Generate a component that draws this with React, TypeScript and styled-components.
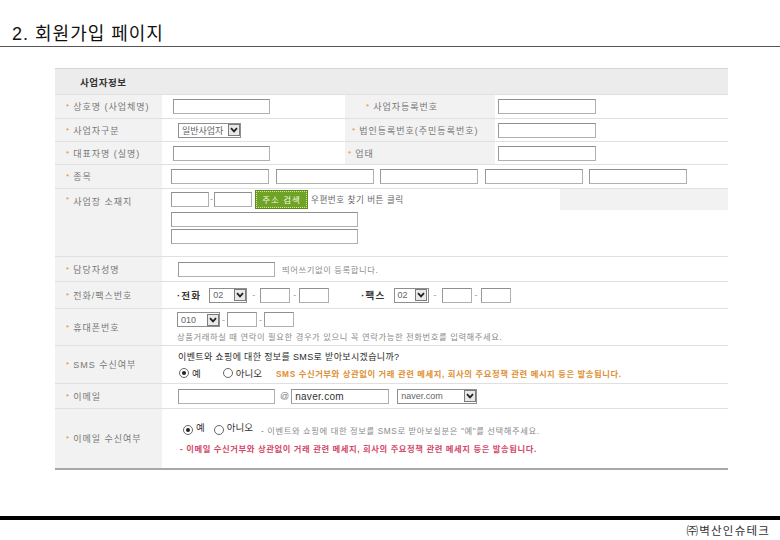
import React from "react";
import styled, { createGlobalStyle } from "styled-components";

const Global = createGlobalStyle`
  html, body { margin: 0; padding: 0; background: #fff; }
  body { font-family: "Liberation Sans", "Noto Sans CJK KR", sans-serif; }
  * { box-sizing: border-box; }
`;

const Page = styled.div`
  width: 780px;
  height: 540px;
  display: flex;
  flex-direction: column;
  overflow: hidden;
`;

const TitleBar = styled.header`
  height: 47px;
  padding: 18px 0 0 12px;
  display: flex;
  align-items: center;
  border-bottom: 1px solid #555;
`;

const Title = styled.h1`
  margin: 0;
  font-size: 18px;
  font-weight: normal;
  color: #111;
  letter-spacing: 1px;
`;

const Form = styled.section`
  margin: 21px 0 0 55px;
  width: 673px;
  border-top: 1px solid #d4d4d4;
  border-bottom: 2px solid #a8a8a8;
`;

const Header = styled.div`
  height: 25px;
  background: #ececec;
  display: flex;
  align-items: center;
  padding-left: 25px;
  font-size: 9.5px;
  font-weight: bold;
  letter-spacing: 0.6px;
  color: #333;
`;

const Row = styled.div<{ h: number }>`
  display: flex;
  height: ${(p) => p.h}px;
  border-top: 1px solid #e0e0e0;
`;

const Label = styled.div<{ top?: number }>`
  width: 107px;
  flex: none;
  background: #f2f2f2;
  display: flex;
  align-items: ${(p) => (p.top !== undefined ? "flex-start" : "center")};
  padding: ${(p) => (p.top !== undefined ? `${p.top}px` : "0")} 0 0 11px;
  font-size: 9px;
  letter-spacing: 1px;
  color: #777;
  white-space: nowrap;
`;

const SideLabel = styled.div<{ pl: number }>`
  width: 150px;
  flex: none;
  background: #f2f2f2;
  display: flex;
  align-items: center;
  padding-left: ${(p) => p.pl}px;
  font-size: 9px;
  letter-spacing: 1px;
  color: #777;
  white-space: nowrap;
`;

const Star = styled.span`
  color: #e3913f;
  font-size: 8px;
  margin-right: 4px;
  letter-spacing: 0;
`;

const Cell = styled.div<{ pl: number; w?: number; gap?: number }>`
  ${(p) => (p.w ? `width: ${p.w}px; flex: none;` : "flex: 1;")}
  display: flex;
  align-items: center;
  gap: ${(p) => p.gap ?? 0}px;
  padding-left: ${(p) => p.pl}px;
  background: #fff;
`;

const Stack = styled.div<{ pl: number; gap?: number }>`
  flex: 1;
  display: flex;
  flex-direction: column;
  justify-content: center;
  gap: ${(p) => p.gap ?? 0}px;
  padding-left: ${(p) => p.pl}px;
  background: #fff;
`;

const Line = styled.div<{ gap?: number; pl?: number }>`
  display: flex;
  align-items: center;
  gap: ${(p) => p.gap ?? 0}px;
  padding-left: ${(p) => p.pl ?? 0}px;
`;

const Field = styled.input<{ w: number }>`
  width: ${(p) => p.w}px;
  height: 15px;
  flex: none;
  margin: 0;
  padding: 0 3px;
  border: 1px solid #b0b0b0;
  border-top-color: #8f8f8f;
  border-left-color: #999;
  background: #fff;
  font-family: inherit;
  font-size: 10px;
  letter-spacing: 0.3px;
  color: #333;
  outline: none;
`;

const Drop = styled.div<{ w: number }>`
  width: ${(p) => p.w}px;
  height: 15px;
  flex: none;
  border: 1px solid #8f8f8f;
  background: #fff;
  display: flex;
  align-items: center;
  justify-content: space-between;
  padding-left: 3px;
  font-size: 9px;
  color: #666;
  white-space: nowrap;
`;

const Arrow = styled.span`
  width: 12px;
  height: 12px;
  flex: none;
  margin-right: 0.5px;
  border: 1px solid #7c7c7c;
  background: #e9e9e9;
  display: flex;
  align-items: center;
  justify-content: center;
`;

const Dash = styled.span<{ m?: number }>`
  font-size: 9px;
  color: #999;
  margin: 0 ${(p) => p.m ?? 3}px;
`;

const Note = styled.span<{ tone?: "gray" | "orange" | "red" | "dark" }>`
  font-size: ${(p) => (p.tone === "dark" ? "9px" : "8.3px")};
  letter-spacing: ${(p) => (p.tone === "dark" ? "0.35px" : "0.6px")};
  white-space: nowrap;
  font-weight: ${(p) => (p.tone === "orange" || p.tone === "red" ? "bold" : "normal")};
  color: ${(p) =>
    p.tone === "orange"
      ? "#dd8f34"
      : p.tone === "red"
      ? "#d4486a"
      : p.tone === "dark"
      ? "#2b2b2b"
      : "#8a8a8a"};
`;

const Bullet = styled.span`
  font-size: 9.5px;
  font-weight: bold;
  letter-spacing: 1.2px;
  color: #333;
  white-space: nowrap;
`;

const SearchButton = styled.button`
  width: 51px;
  height: 17px;
  margin: 0 0 0 4px;
  padding: 0;
  background: #6ea326;
  border: 1px dotted #dbe8a0;
  outline: 1px solid #5b8c1b;
  color: #f4f8e0;
  font-family: inherit;
  font-size: 8.5px;
  letter-spacing: 1px;
`;

const Hint = styled.span`
  margin-left: 4px;
  font-size: 8.6px;
  letter-spacing: 0.5px;
  color: #666;
  white-space: nowrap;
`;

const GrayFill = styled.div`
  margin-left: auto;
  align-self: flex-start;
  width: 168px;
  height: 21px;
  background: #f2f2f2;
`;

const Radio = styled.span<{ on?: boolean }>`
  width: 10px;
  height: 10px;
  flex: none;
  border: 1px solid #666;
  border-radius: 50%;
  background: #fff;
  display: flex;
  align-items: center;
  justify-content: center;
  &::after {
    content: "";
    width: 4px;
    height: 4px;
    border-radius: 50%;
    background: ${(p) => (p.on ? "#222" : "transparent")};
  }
`;

const RadioText = styled.span<{ raised?: boolean }>`
  font-size: 9.5px;
  color: #333;
  margin-left: 3px;
  position: relative;
  top: ${(p) => (p.raised ? "-3px" : "0")};
`;

const Gap = styled.span<{ w: number }>`
  width: ${(p) => p.w}px;
  flex: none;
`;

const At = styled.span`
  font-size: 9px;
  color: #777;
  margin: 0 2px 0 5px;
`;

const Footer = styled.footer`
  margin-top: auto;
  display: flex;
  flex-direction: column;
`;

const FooterRule = styled.div`
  height: 4px;
  background: #000;
`;

const Company = styled.div`
  height: 20px;
  display: flex;
  align-items: center;
  justify-content: flex-end;
  padding-right: 10px;
  font-size: 11.5px;
  letter-spacing: 1.2px;
  color: #333;
`;

const Chevron = () => (
  <svg width="8" height="6" viewBox="0 0 8 6">
    <path d="M1 1.2 L4 4.4 L7 1.2" fill="none" stroke="#222" strokeWidth="1.8" />
  </svg>
);

const Select = ({ w, text }: { w: number; text: string }) => (
  <Drop w={w}>
    <span>{text}</span>
    <Arrow>
      <Chevron />
    </Arrow>
  </Drop>
);

const L = ({ children, top }: { children: React.ReactNode; top?: number }) => (
  <Label top={top}>
    <Star>*</Star>
    {children}
  </Label>
);

export default function App() {
  return (
    <Page>
      <Global />
      <TitleBar>
        <Title>2. 회원가입 페이지</Title>
      </TitleBar>

      <Form>
        <Header>사업자정보</Header>

        <Row h={24}>
          <L>상호명 (사업체명)</L>
          <Cell w={183} pl={11}>
            <Field w={97} readOnly />
          </Cell>
          <SideLabel pl={21}>
            <Star>*</Star>사업자등록번호
          </SideLabel>
          <Cell pl={3}>
            <Field w={98} readOnly />
          </Cell>
        </Row>

        <Row h={23}>
          <L>사업자구분</L>
          <Cell w={183} pl={16}>
            <Select w={63} text="일반사업자" />
          </Cell>
          <SideLabel pl={7}>
            <Star>*</Star>법인등록번호(주민등록번호)
          </SideLabel>
          <Cell pl={3}>
            <Field w={98} readOnly />
          </Cell>
        </Row>

        <Row h={23}>
          <L>대표자명 (실명)</L>
          <Cell w={183} pl={11}>
            <Field w={97} readOnly />
          </Cell>
          <SideLabel pl={3}>
            <Star>*</Star>업태
          </SideLabel>
          <Cell pl={3}>
            <Field w={98} readOnly />
          </Cell>
        </Row>

        <Row h={24}>
          <L>종목</L>
          <Cell pl={9} gap={6.5}>
            <Field w={98} readOnly />
            <Field w={98} readOnly />
            <Field w={98} readOnly />
            <Field w={98} readOnly />
            <Field w={98} readOnly />
          </Cell>
        </Row>

        <Row h={68}>
          <L top={6}>사업장 소재지</L>
          <Stack pl={9} gap={2}>
            <Line>
              <Field w={38} readOnly />
              <Dash m={1}>-</Dash>
              <Field w={38} readOnly />
              <SearchButton>주소 검색</SearchButton>
              <Hint>우편번호 찾기 버튼 클릭</Hint>
              <GrayFill />
            </Line>
            <Field w={187} readOnly />
            <Field w={187} readOnly style={{ marginBottom: 13 }} />
          </Stack>
        </Row>

        <Row h={25}>
          <L>담당자성명</L>
          <Cell pl={16} gap={7}>
            <Field w={97} readOnly />
            <Note>띄어쓰기없이 등록합니다.</Note>
          </Cell>
        </Row>

        <Row h={27}>
          <L>전화/팩스번호</L>
          <Cell pl={15}>
            <Bullet>·전화</Bullet>
            <Gap w={8} />
            <Select w={38} text="02" />
            <Dash m={5}>-</Dash>
            <Field w={30} readOnly />
            <Dash m={3}>-</Dash>
            <Field w={30} readOnly />
            <Gap w={32} />
            <Bullet>·팩스</Bullet>
            <Gap w={8} />
            <Select w={35} text="02" />
            <Dash m={5}>-</Dash>
            <Field w={30} readOnly />
            <Dash m={3}>-</Dash>
            <Field w={30} readOnly />
          </Cell>
        </Row>

        <Row h={37}>
          <L>휴대폰번호</L>
          <Stack pl={15} gap={3}>
            <Line>
              <Select w={43} text="010" />
              <Dash m={2}>-</Dash>
              <Field w={30} readOnly />
              <Dash m={2}>-</Dash>
              <Field w={30} readOnly />
            </Line>
            <Note>상품거래하실 때 연락이 필요한 경우가 있으니 꼭 연락가능한 전화번호를 입력해주세요.</Note>
          </Stack>
        </Row>

        <Row h={38}>
          <L>SMS 수신여부</L>
          <Stack pl={16} gap={3}>
            <Note tone="dark">이벤트와 쇼핑에 대한 정보를 SMS로 받아보시겠습니까?</Note>
            <Line pl={1}>
              <Radio on />
              <RadioText>예</RadioText>
              <Gap w={22} />
              <Radio />
              <RadioText>아니오</RadioText>
              <Gap w={14} />
              <Note tone="orange">
                SMS 수신거부와 상관없이 거래 관련 메세지, 회사의 주요정책 관련 메시지 등은 발송됩니다.
              </Note>
            </Line>
          </Stack>
        </Row>

        <Row h={25}>
          <L>이메일</L>
          <Cell pl={16}>
            <Field w={97} readOnly />
            <At>@</At>
            <Field w={98} readOnly defaultValue="naver.com" />
            <Gap w={8} />
            <Select w={80} text="naver.com" />
          </Cell>
        </Row>

        <Row h={60}>
          <L>이메일 수신여부</L>
          <Stack pl={18} gap={5}>
            <Line pl={3}>
              <Radio on />
              <RadioText raised>예</RadioText>
              <Gap w={9} />
              <Radio />
              <RadioText raised>아니오</RadioText>
              <Gap w={8} />
              <Note>- 이벤트와 쇼핑에 대한 정보를 SMS로 받아보실분은 "예"를 선택해주세요.</Note>
            </Line>
            <Note tone="red">
              - 이메일 수신거부와 상관없이 거래 관련 메세지, 회사의 주요정책 관련 메세지 등은 발송됩니다.
            </Note>
          </Stack>
        </Row>
      </Form>

      <Footer>
        <FooterRule />
        <Company>㈜벽산인슈테크</Company>
      </Footer>
    </Page>
  );
}
